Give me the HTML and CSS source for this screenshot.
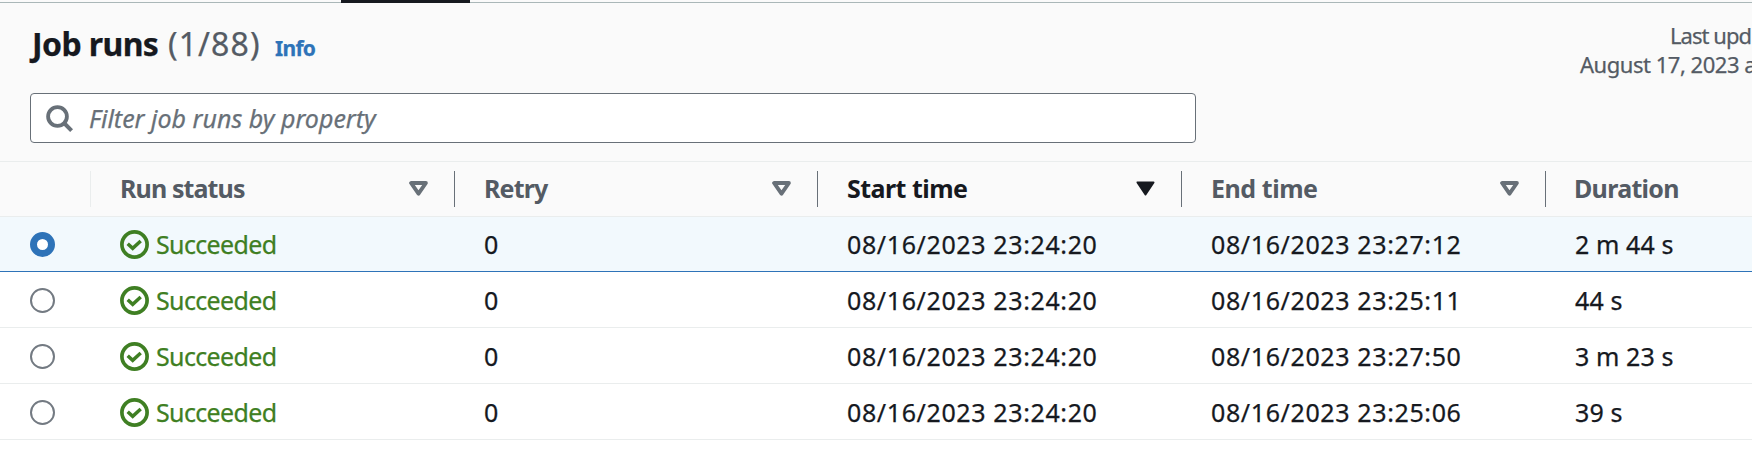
FILE: index.html
```html
<!DOCTYPE html>
<html lang="en">
<head>
<meta charset="utf-8">
<title>Job runs</title>
<link rel="stylesheet" href="styles.css">
</head>
<body>
<svg class="defs" aria-hidden="true">
  <symbol id="ok" viewBox="0 0 29 29"><circle cx="14.5" cy="14.5" r="12.6" fill="none" stroke="currentColor" stroke-width="3.7"/><path d="M7.7 13.7l5 4.6 8-7.3" fill="none" stroke="currentColor" stroke-width="3.5"/></symbol>
  <symbol id="sort" viewBox="0 0 19 15"><path d="M2.1 2h14.8L9.5 12.6z" fill="none" stroke="currentColor" stroke-width="3.9" stroke-linejoin="round"/></symbol>
  <symbol id="sorted" viewBox="0 0 19 15"><path d="M1.5 1.4h16L9.5 13.4z" fill="currentColor" stroke="currentColor" stroke-width="2" stroke-linejoin="round"/></symbol>
</svg>
<main class="page">
  <div class="tabs"><span class="tab-active"></span></div>
  <header class="head">
    <div class="title-row">
      <h1 class="title"><span class="name">Job runs</span><span class="count">(1/88)</span></h1>
      <a class="info">Info</a>
    </div>
    <div class="updated"><div class="up-label">Last upd</div><div class="up-date">August 17, 2023 a</div></div>
  </header>
  <div class="search">
    <svg class="search-icon" viewBox="0 0 27 27"><circle cx="11.5" cy="11.5" r="9.4" fill="none" stroke="currentColor" stroke-width="3.8"/><path d="M18 18l7.6 7.6" stroke="currentColor" stroke-width="4"/></svg>
    <span class="placeholder">Filter job runs by property</span>
  </div>
  <section class="table">
    <div class="row thead">
      <div class="cell th pick"></div>
      <div class="cell th"><span class="t-status">Run status</span><svg class="sort"><use href="#sort"/></svg></div>
      <div class="cell th"><span class="t-retry">Retry</span><svg class="sort"><use href="#sort"/></svg></div>
      <div class="cell th current"><span class="t-start">Start time</span><svg class="sort"><use href="#sorted"/></svg></div>
      <div class="cell th"><span class="t-end">End time</span><svg class="sort"><use href="#sort"/></svg></div>
      <div class="cell th last"><span class="t-dur">Duration</span></div>
    </div>
    <div class="row selected">
      <div class="cell pick"><span class="radio on"></span></div>
      <div class="cell status"><svg class="ok"><use href="#ok"/></svg><span>Succeeded</span></div>
      <div class="cell">0</div>
      <div class="cell date">08/16/2023 23:24:20</div>
      <div class="cell date">08/16/2023 23:27:12</div>
      <div class="cell dur">2 m 44 s</div>
    </div>
    <div class="row">
      <div class="cell pick"><span class="radio"></span></div>
      <div class="cell status"><svg class="ok"><use href="#ok"/></svg><span>Succeeded</span></div>
      <div class="cell">0</div>
      <div class="cell date">08/16/2023 23:24:20</div>
      <div class="cell date">08/16/2023 23:25:11</div>
      <div class="cell dur">44 s</div>
    </div>
    <div class="row">
      <div class="cell pick"><span class="radio"></span></div>
      <div class="cell status"><svg class="ok"><use href="#ok"/></svg><span>Succeeded</span></div>
      <div class="cell">0</div>
      <div class="cell date">08/16/2023 23:24:20</div>
      <div class="cell date">08/16/2023 23:27:50</div>
      <div class="cell dur">3 m 23 s</div>
    </div>
    <div class="row">
      <div class="cell pick"><span class="radio"></span></div>
      <div class="cell status"><svg class="ok"><use href="#ok"/></svg><span>Succeeded</span></div>
      <div class="cell">0</div>
      <div class="cell date">08/16/2023 23:24:20</div>
      <div class="cell date">08/16/2023 23:25:06</div>
      <div class="cell dur">39 s</div>
    </div>
  </section>
</main>
</body>
</html>
```
FILE: styles.css
```css
* { box-sizing: border-box; }
body { margin: 0; background: #fff; color: #16191f; font: 25px/34px "Noto Sans", sans-serif; -webkit-text-stroke: 0.25px currentColor; }
.defs { display: none; }
.page { width: 100vw; height: 452px; overflow: hidden; background: linear-gradient(#fafafa 216px, #fff 216px); }

.tabs { height: 3px; padding-left: 341px; background: linear-gradient(#fafafa 2px, #aab7b8 2px); }
.tab-active { display: block; width: 129px; height: 3px; background: #16191f; }

.head { display: flex; justify-content: space-between; height: 90px; padding-left: 30px; white-space: nowrap; }
.title-row { display: flex; align-items: baseline; padding-top: 19px; }
.title { display: flex; margin: 0; font-size: 32px; line-height: 44px; }
.name { width: 137px; padding-left: 2px; letter-spacing: -0.6px; }
.count { width: 108px; padding-left: 1px; color: #545b64; font-weight: 400; letter-spacing: 1.1px; }
.info { color: #2e73b8; font-size: 21px; font-weight: 700; letter-spacing: -0.7px; }
.updated { width: 172px; padding-top: 18px; color: #545b64; font-size: 22px; line-height: 29px; }
.up-label { padding-left: 90px; letter-spacing: -0.95px; }
.up-date { letter-spacing: -0.47px; }

.search { display: flex; align-items: center; width: 1166px; height: 50px; margin-left: 30px; padding-left: 15px; border: 1px solid #687078; border-radius: 4px; background: #fff; color: #687078; }
.search-icon { width: 27px; height: 27px; margin-right: 16px; }
.placeholder { font-style: italic; letter-spacing: 0; }

.table { margin-top: 18px; border-top: 1px solid #eaeded; white-space: nowrap; }
.row { display: grid; grid-template-columns: 91px 364px 363px 364px 364px 1fr; height: 56px; border-bottom: 1px solid #eaeded; background: #fff; }
.cell { display: flex; align-items: center; padding: 1px 0 0 29px; }
.thead { height: 55px; background: #fafafa; color: #545b64; font-weight: 700; -webkit-text-stroke: 0; }
.th { justify-content: space-between; height: 36px; margin-top: 9px; padding: 0 26px 2px 29px; border-right: 1px solid #687078; }
.th.pick { border-color: #eaeded; }
.th.last { padding-left: 28px; border: 0; }
.th.current { color: #16191f; }
.t-status { letter-spacing: -0.88px; }
.t-retry { letter-spacing: -0.84px; }
.t-start { letter-spacing: -0.54px; }
.t-end { letter-spacing: -0.45px; }
.t-dur { letter-spacing: -0.7px; }
.sort { width: 19px; height: 15px; color: #687078; }
.current .sort { color: #16191f; }

.selected { height: 55px; border-bottom-color: #2e73b8; background: #f2f9fd; }
.selected .cell { padding-top: 0; }
.cell.pick { padding-left: 30px; }
.radio { width: 25px; height: 25px; border: 2px solid #737a82; border-radius: 50%; background: #fff; }
.radio.on { border: 7px solid #2e73b8; }
.status { gap: 7px; color: #3f7f23; letter-spacing: -0.64px; }
.ok { width: 29px; height: 29px; }
.date { letter-spacing: 0.62px; }
.dur { letter-spacing: 0.1px; }
```
